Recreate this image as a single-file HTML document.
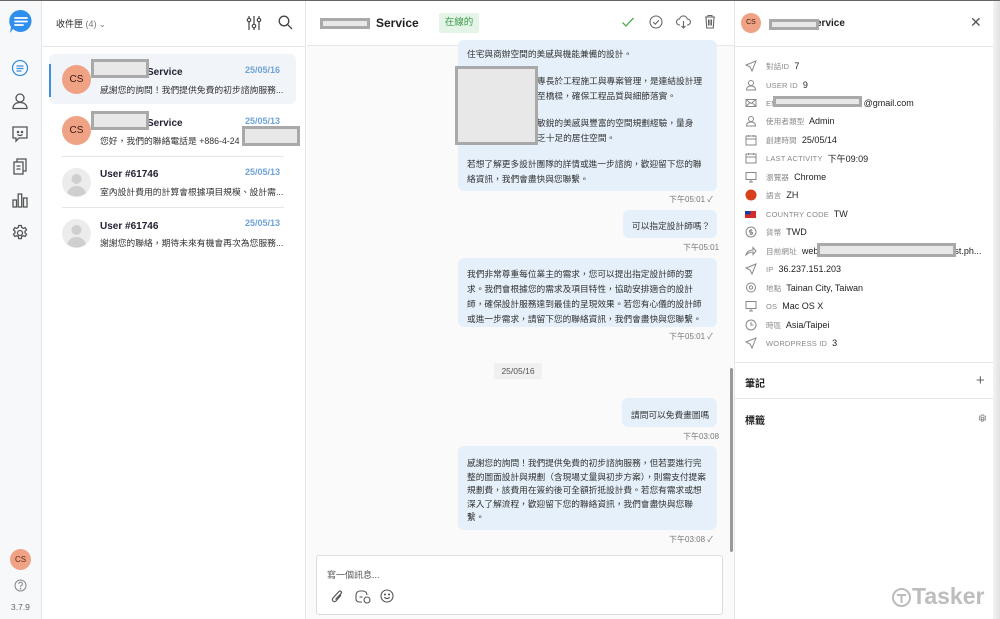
<!DOCTYPE html>
<html><head><meta charset="utf-8"><style>
*{box-sizing:border-box;margin:0;padding:0}
body{width:1000px;height:619px;overflow:hidden;position:relative;background:#fff;font-family:"Liberation Sans","Noto Sans CJK TC",sans-serif;color:#222}
.a{position:absolute}
.t{position:absolute;white-space:nowrap}
.red{position:absolute;background:#e8e8e8;border:3px solid #a9a9a9}
.bub{position:absolute;background:#e5f0fa;border-radius:6px;font-size:8.7px;color:#333}
.bub div{position:absolute;left:9px;white-space:nowrap}
.tm{position:absolute;font-size:8px;color:#777;white-space:nowrap}
.lbl{font-size:7.5px;color:#888;letter-spacing:.2px}
.row{position:absolute;left:745px;font-size:9px;color:#222;white-space:nowrap;height:12px;display:flex;align-items:center}
.row svg{margin-right:9px}
</style></head><body>
<div class="a" style="left:0;top:0;width:1000px;height:1px;background:#666"></div>
<!-- sidebar -->
<div class="a" style="left:0;top:1px;width:42px;height:618px;background:#f6f8fa;border-right:1px solid #e4e6ea"></div>
<svg class="a" style="left:9px;top:9px" width="24" height="26" viewBox="0 0 24 26"><path d="M12 1a11 11 0 1 1-8 19l-3 4 1-6A11 11 0 0 1 12 1z" fill="#2f8fec"/><path d="M6 9h12M6 12.5h12M6 16h8" stroke="#fff" stroke-width="1.8" stroke-linecap="round"/></svg>
<svg class="a" style="left:11px;top:59px" width="18" height="18" viewBox="0 0 18 18" fill="none" stroke="#3d8fe0" stroke-width="1.3"><circle cx="9" cy="9" r="7.5"/><path d="M5.5 7h7M5.5 9.5h7M5.5 12h5"/></svg>
<svg class="a" style="left:11px;top:92px" width="18" height="18" viewBox="0 0 18 18" fill="none" stroke="#555" stroke-width="1.3"><circle cx="9" cy="6" r="4"/><path d="M2 16.5c0-4 3-6 7-6s7 2 7 6z"/></svg>
<svg class="a" style="left:11px;top:125px" width="18" height="18" viewBox="0 0 18 18" fill="none" stroke="#555" stroke-width="1.3"><path d="M2 2h14v11H8l-3 3v-3H2z"/><circle cx="7" cy="7" r=".6" fill="#555"/><circle cx="11" cy="7" r=".6" fill="#555"/><path d="M6.5 9.5q2.5 2 5 0"/></svg>
<svg class="a" style="left:12px;top:158px" width="16" height="18" viewBox="0 0 16 18" fill="none" stroke="#555" stroke-width="1.3"><rect x="2" y="4" width="9" height="12"/><path d="M5 4V1h9v12h-3"/><path d="M4.5 8h4M4.5 11h4"/></svg>
<svg class="a" style="left:11px;top:191px" width="18" height="18" viewBox="0 0 18 18" fill="none" stroke="#555" stroke-width="1.3"><rect x="2" y="9" width="3.5" height="7"/><rect x="7.2" y="3" width="3.5" height="13"/><rect x="12.5" y="7" width="3.5" height="9"/></svg>
<svg class="a" style="left:11px;top:224px" width="18" height="18" viewBox="0 0 18 18" fill="none" stroke="#555" stroke-width="1.3"><circle cx="9" cy="9" r="2.5"/><path d="M7.7 1.5h2.6l.4 2 1.6.9 1.9-.7 1.3 2.2-1.5 1.4v1.5l1.5 1.4-1.3 2.2-1.9-.7-1.6.9-.4 2H7.7l-.4-2-1.6-.9-1.9.7-1.3-2.2 1.5-1.4V7.3L2.5 5.9l1.3-2.2 1.9.7 1.6-.9z"/></svg>
<div class="a" style="left:10px;top:549px;width:21px;height:21px;border-radius:50%;background:#f0a285;font-size:8px;color:#5a2a1a;text-align:center;line-height:21px">CS</div>
<svg class="a" style="left:14px;top:579px" width="13" height="13" viewBox="0 0 13 13" fill="none" stroke="#888" stroke-width="1"><circle cx="6.5" cy="6.5" r="5.5"/><path d="M4.8 5a1.8 1.8 0 1 1 2.4 1.6c-.6.3-.7.6-.7 1.3"/><circle cx="6.5" cy="9.6" r=".4" fill="#888"/></svg>
<div class="t" style="left:11px;top:602px;font-size:8.5px;color:#666">3.7.9</div>
<!-- list -->
<div class="a" style="left:42px;top:1px;width:264px;height:618px;background:#fff;border-right:1px solid #e4e6ea"></div>
<div class="a" style="left:42px;top:46px;width:264px;height:1px;background:#e4e6ea"></div>
<div class="t" style="left:56px;top:17px;font-size:9px;color:#222">收件匣 <span style="color:#777">(4)</span> <span style="color:#777;font-size:8px">⌄</span></div>
<svg class="a" style="left:246px;top:15px" width="16" height="16" viewBox="0 0 16 16" fill="none" stroke="#444" stroke-width="1.2"><path d="M3 1v14M8 1v14M13 1v14"/><circle cx="3" cy="5" r="1.7" fill="#fff"/><circle cx="8" cy="11" r="1.7" fill="#fff"/><circle cx="13" cy="5" r="1.7" fill="#fff"/></svg>
<svg class="a" style="left:278px;top:15px" width="15" height="15" viewBox="0 0 15 15" fill="none" stroke="#444" stroke-width="1.3"><circle cx="6" cy="6" r="4.8"/><path d="M9.6 9.6l4.4 4.4"/></svg>
<div class="a" style="left:49px;top:54px;width:247px;height:50px;background:#f1f4f8;border-radius:6px"></div>
<div class="a" style="left:49px;top:64px;width:2px;height:33px;background:#3d8fe0"></div>
<div class="a" style="left:62px;top:65px;width:29px;height:29px;border-radius:50%;background:#f0a285;font-size:10px;color:#3a1a10;text-align:center;line-height:29px">CS</div>
<div class="t" style="left:147px;top:67px;font-size:10px;font-weight:bold;color:#223">Service</div>
<div class="red" style="left:91px;top:59px;width:58px;height:19px"></div>
<div class="t" style="left:245px;top:65px;font-size:9px;font-weight:bold;color:#6fa3d8">25/05/16</div>
<div class="t" style="left:100px;top:83px;font-size:8.8px;color:#333">感謝您的詢問！我們提供免費的初步諮詢服務...</div>
<div class="a" style="left:62px;top:116px;width:29px;height:29px;border-radius:50%;background:#f0a285;font-size:10px;color:#3a1a10;text-align:center;line-height:29px">CS</div>
<div class="t" style="left:147px;top:118px;font-size:10px;font-weight:bold;color:#223">Service</div>
<div class="red" style="left:91px;top:111px;width:58px;height:19px"></div>
<div class="t" style="left:245px;top:116px;font-size:9px;font-weight:bold;color:#6fa3d8">25/05/13</div>
<div class="t" style="left:100px;top:134px;font-size:8.8px;color:#333">您好，我們的聯絡電話是 +886-4-24</div>
<div class="red" style="left:242px;top:126px;width:58px;height:20px"></div>
<div class="a" style="left:62px;top:156px;width:222px;height:1px;background:#e4e6ea"></div>
<svg class="a" style="left:62px;top:168px" width="29" height="29" viewBox="0 0 29 29"><circle cx="14.5" cy="14.5" r="14.5" fill="#ececec"/><circle cx="14.5" cy="11" r="5" fill="#cfcfcf"/><path d="M5 25c2-5 5.5-7 9.5-7s7.5 2 9.5 7a14.5 14.5 0 0 1-19 0z" fill="#cfcfcf"/></svg>
<div class="t" style="left:100px;top:169px;font-size:10px;font-weight:bold;color:#223">User #61746</div>
<div class="t" style="left:245px;top:167px;font-size:9px;font-weight:bold;color:#6fa3d8">25/05/13</div>
<div class="t" style="left:100px;top:185px;font-size:8.8px;color:#333">室內設計費用的計算會根據項目規模、設計需...</div>
<div class="a" style="left:62px;top:207px;width:222px;height:1px;background:#e4e6ea"></div>
<svg class="a" style="left:62px;top:219px" width="29" height="29" viewBox="0 0 29 29"><circle cx="14.5" cy="14.5" r="14.5" fill="#ececec"/><circle cx="14.5" cy="11" r="5" fill="#cfcfcf"/><path d="M5 25c2-5 5.5-7 9.5-7s7.5 2 9.5 7a14.5 14.5 0 0 1-19 0z" fill="#cfcfcf"/></svg>
<div class="t" style="left:100px;top:221px;font-size:10px;font-weight:bold;color:#223">User #61746</div>
<div class="t" style="left:245px;top:218px;font-size:9px;font-weight:bold;color:#6fa3d8">25/05/13</div>
<div class="t" style="left:100px;top:236px;font-size:8.8px;color:#333">謝謝您的聯絡，期待未來有機會再次為您服務...</div>
<!-- chat -->
<div class="a" style="left:307px;top:1px;width:427px;height:618px;background:#fafafa"></div>
<div class="a" style="left:307px;top:1px;width:427px;height:45px;background:#fff;border-bottom:1px solid #e4e6ea"></div>
<div class="t" style="left:376px;top:16px;font-size:12px;font-weight:bold;color:#222">Service</div>
<div class="a" style="left:320px;top:18px;width:50px;height:11px;background:#e8e8e8;border:3px solid #a9a9a9"></div>
<div class="t" style="left:439px;top:13px;width:40px;height:20px;background:#e4f4e6;color:#3a9a4a;font-size:9.5px;line-height:20px;text-align:center;border-radius:2px">在線的</div>
<svg class="a" style="left:621px;top:15px" width="14" height="14" viewBox="0 0 14 14" fill="none" stroke="#4caf50" stroke-width="1.3"><path d="M1.5 7.5l3.5 3.5 7.5-8"/></svg>
<svg class="a" style="left:649px;top:15px" width="14" height="14" viewBox="0 0 14 14" fill="none" stroke="#666" stroke-width="1.1"><circle cx="7" cy="7" r="6"/><path d="M4.3 7.2l2 2 3.6-4"/></svg>
<svg class="a" style="left:676px;top:15px" width="15" height="14" viewBox="0 0 15 14" fill="none" stroke="#666" stroke-width="1.1"><path d="M4 10H3.5a3 3 0 0 1 0-6 4 4 0 0 1 7.8 0 3 3 0 0 1 .2 6H11M7.5 6v7M5.5 11l2 2 2-2"/></svg>
<svg class="a" style="left:704px;top:14px" width="12" height="15" viewBox="0 0 12 15" fill="none" stroke="#666" stroke-width="1.1"><path d="M1 3h10M4 3V1.5h4V3M2 3l.7 11h6.6L10 3M4.5 5.5v6M6 5.5v6M7.5 5.5v6"/></svg>
<!-- bubble1 -->
<div class="bub" style="left:458px;top:40px;width:259px;height:151px">
<div style="top:7px">住宅與商辦空間的美感與機能兼備的設計。</div>
<div style="top:34px;left:79px">專長於工程施工與專案管理，是連結設計理</div>
<div style="top:49px;left:79px">至橋樑，確保工程品質與細節落實。</div>
<div style="top:76px;left:79px">敏銳的美感與豐富的空間規劃經驗，量身</div>
<div style="top:91px;left:79px">乏十足的居住空間。</div>
<div style="top:117px">若想了解更多設計團隊的詳情或進一步諮詢，歡迎留下您的聯</div>
<div style="top:132px">絡資訊，我們會盡快與您聯繫。</div>
</div>
<div class="red" style="left:455px;top:66px;width:83px;height:79px"></div>
<div class="tm" style="left:669px;top:194px">下午05:01 ✓</div>
<div class="bub" style="left:623px;top:210px;width:94px;height:28px"><div style="top:9px">可以指定設計師嗎？</div></div>
<div class="tm" style="left:683px;top:242px">下午05:01</div>
<div class="bub" style="left:458px;top:258px;width:259px;height:69px">
<div style="top:9px">我們非常尊重每位業主的需求，您可以提出指定設計師的要</div>
<div style="top:24px">求。我們會根據您的需求及項目特性，協助安排適合的設計</div>
<div style="top:39px">師，確保設計服務達到最佳的呈現效果。若您有心儀的設計師</div>
<div style="top:54px">或進一步需求，請留下您的聯絡資訊，我們會盡快與您聯繫。</div>
</div>
<div class="tm" style="left:669px;top:331px">下午05:01 ✓</div>
<div class="t" style="left:494px;top:363px;width:48px;height:16px;background:#f0f0f0;font-size:8.5px;color:#555;line-height:16px;text-align:center">25/05/16</div>
<div class="bub" style="left:622px;top:398px;width:95px;height:29px"><div style="top:10px">請問可以免費畫圖嗎</div></div>
<div class="tm" style="left:683px;top:431px">下午03:08</div>
<div class="bub" style="left:458px;top:446px;width:259px;height:84px">
<div style="top:10px">感謝您的詢問！我們提供免費的初步諮詢服務，但若要進行完</div>
<div style="top:23.5px">整的圖面設計與規劃（含現場丈量與初步方案），則需支付提案</div>
<div style="top:37px">規劃費，該費用在簽約後可全額折抵設計費。若您有需求或想</div>
<div style="top:50.5px">深入了解流程，歡迎留下您的聯絡資訊，我們會盡快與您聯</div>
<div style="top:64px">繫。</div>
</div>
<div class="tm" style="left:669px;top:534px">下午03:08 ✓</div>
<div class="a" style="left:730px;top:368px;width:3px;height:184px;background:#999;border-radius:2px"></div>
<div class="a" style="left:316px;top:555px;width:407px;height:60px;background:#fff;border:1px solid #ddd;border-radius:3px"></div>
<div class="t" style="left:327px;top:568px;font-size:9px;color:#555">寫一個訊息...</div>
<svg class="a" style="left:331px;top:590px" width="13" height="14" viewBox="0 0 13 14" fill="none" stroke="#555" stroke-width="1.2"><path d="M10 5L5 11a2 2 0 0 1-3-3l6-6.5a1.3 1.3 0 0 1 2 2L4.5 9.5"/></svg>
<svg class="a" style="left:355px;top:590px" width="16" height="14" viewBox="0 0 16 14" fill="none" stroke="#555" stroke-width="1.1"><path d="M7 12H4a3 3 0 0 1-3-3V5a4 4 0 0 1 4-4h3a4 4 0 0 1 4 4"/><circle cx="12" cy="10" r="3"/><path d="M4.5 7h3"/></svg>
<svg class="a" style="left:380px;top:589px" width="14" height="14" viewBox="0 0 14 14" fill="none" stroke="#555" stroke-width="1.1"><circle cx="7" cy="7" r="6"/><circle cx="5" cy="5.5" r=".5" fill="#555"/><circle cx="9" cy="5.5" r=".5" fill="#555"/><path d="M4.3 8.3q2.7 2.5 5.4 0"/></svg>
<!-- right panel -->
<div class="a" style="left:734px;top:1px;width:1px;height:618px;background:#e4e6ea"></div>
<div class="a" style="left:735px;top:46px;width:258px;height:1px;background:#e4e6ea"></div>
<div class="a" style="left:993px;top:1px;width:7px;height:618px;background:linear-gradient(90deg,#f4f4f4,#e2e2e2)"></div>
<div class="a" style="left:741px;top:13px;width:20px;height:20px;border-radius:50%;background:#f0a285;font-size:7px;color:#3a1a10;text-align:center;line-height:20px">CS</div>
<div class="t" style="left:816px;top:18px;font-size:10px;font-weight:bold;color:#222">ervice</div>
<div class="a" style="left:769px;top:19px;width:50px;height:11px;background:#e8e8e8;border:3px solid #a9a9a9"></div>
<div class="t" style="left:970px;top:14px;font-size:14px;color:#555">✕</div>
<div class="row" style="top:60px"><svg width="12" height="12" viewBox="0 0 12 12" fill="none" stroke="#888"><path d="M11 1L1 5l4 2 2 4z"/></svg><span class="lbl">對話ID</span>&nbsp; 7</div>
<div class="row" style="top:79px"><svg width="12" height="12" viewBox="0 0 12 12" fill="none" stroke="#888"><circle cx="6" cy="4" r="2.5"/><path d="M1.5 11c0-3 2-4 4.5-4s4.5 1 4.5 4z"/></svg><span class="lbl">USER ID</span>&nbsp; 9</div>
<div class="row" style="top:97px"><svg width="12" height="12" viewBox="0 0 12 12" fill="none" stroke="#888"><rect x="1" y="2.5" width="10" height="7"/><path d="M1 2.5l5 4 5-4M1 9.5l3.5-3.5M11 9.5L7.5 6"/></svg><span class="lbl">EM</span><span style="display:inline-block;width:86px"></span>@gmail.com</div>
<div class="a" style="left:773px;top:96px;width:89px;height:11px;background:#e8e8e8;border:3px solid #a9a9a9"></div>
<div class="row" style="top:115px"><svg width="12" height="12" viewBox="0 0 12 12" fill="none" stroke="#888"><circle cx="6" cy="4" r="2.5"/><path d="M1.5 11c0-3 2-4 4.5-4s4.5 1 4.5 4z"/></svg><span class="lbl">使用者類型</span>&nbsp; Admin</div>
<div class="row" style="top:134px"><svg width="12" height="12" viewBox="0 0 12 12" fill="none" stroke="#888"><rect x="1" y="2" width="10" height="9"/><path d="M1 5h10M3.5 1v2M8.5 1v2"/></svg><span class="lbl">創建時間</span>&nbsp; 25/05/14</div>
<div class="row" style="top:152px"><svg width="12" height="12" viewBox="0 0 12 12" fill="none" stroke="#888"><rect x="1" y="2" width="10" height="9"/><path d="M1 5h10M3.5 1v2M8.5 1v2"/></svg><span class="lbl">LAST ACTIVITY</span>&nbsp; 下午09:09</div>
<div class="row" style="top:171px"><svg width="12" height="12" viewBox="0 0 12 12" fill="none" stroke="#888"><rect x="1" y="1.5" width="10" height="7"/><path d="M4 11h4M6 8.5V11"/></svg><span class="lbl">瀏覽器</span>&nbsp; Chrome</div>
<div class="row" style="top:189px"><svg width="12" height="12" viewBox="0 0 12 12"><circle cx="6" cy="6" r="5.5" fill="#d8401c"/></svg><span class="lbl">語言</span>&nbsp; ZH</div>
<div class="row" style="top:208px"><svg width="12" height="12" viewBox="0 0 12 12"><rect x="0" y="3" width="11" height="7" fill="#d62a2a"/><rect x="0" y="3" width="5.5" height="3.5" fill="#1c3aa0"/></svg><span class="lbl">COUNTRY CODE</span>&nbsp; TW</div>
<div class="row" style="top:226px"><svg width="12" height="12" viewBox="0 0 12 12" fill="none" stroke="#888"><circle cx="6" cy="6" r="5"/><path d="M7.5 4.3H5.3a1 1 0 0 0 0 2h1.4a1 1 0 0 1 0 2H4.5M6 3v6"/></svg><span class="lbl">貨幣</span>&nbsp; TWD</div>
<div class="row" style="top:245px"><svg width="12" height="12" viewBox="0 0 12 12" fill="none" stroke="#888"><path d="M1 10c1-4 4-5 7-5V2.5L11 6 8 9.5V7c-3 0-5 1-7 3z"/></svg><span class="lbl">目前網址</span>&nbsp; web<span style="display:inline-block;width:136px"></span>st.ph...</div>
<div class="a" style="left:817px;top:243px;width:139px;height:14px;background:#e8e8e8;border:3px solid #a9a9a9"></div>
<div class="row" style="top:263px"><svg width="12" height="12" viewBox="0 0 12 12" fill="none" stroke="#888"><path d="M11 1L1 5l4 2 2 4z"/></svg><span class="lbl">IP</span>&nbsp; 36.237.151.203</div>
<div class="row" style="top:282px"><svg width="12" height="12" viewBox="0 0 12 12" fill="none" stroke="#888"><circle cx="6" cy="5.5" r="4.5"/><circle cx="6" cy="5.5" r="1.7"/></svg><span class="lbl">地點</span>&nbsp; Tainan City, Taiwan</div>
<div class="row" style="top:300px"><svg width="12" height="12" viewBox="0 0 12 12" fill="none" stroke="#888"><rect x="1" y="1.5" width="10" height="7"/><path d="M4 11h4M6 8.5V11"/></svg><span class="lbl">OS</span>&nbsp; Mac OS X</div>
<div class="row" style="top:319px"><svg width="12" height="12" viewBox="0 0 12 12" fill="none" stroke="#888"><circle cx="6" cy="6" r="5"/><path d="M6 3v3h2.5"/></svg><span class="lbl">時區</span>&nbsp; Asia/Taipei</div>
<div class="row" style="top:337px"><svg width="12" height="12" viewBox="0 0 12 12" fill="none" stroke="#888"><path d="M11 1L1 5l4 2 2 4z"/></svg><span class="lbl">WORDPRESS ID</span>&nbsp; 3</div>
<div class="a" style="left:735px;top:362px;width:258px;height:1px;background:#e4e6ea"></div>
<div class="t" style="left:745px;top:375px;font-size:10px;font-weight:bold;color:#222">筆記</div>
<div class="t" style="left:976px;top:372px;font-size:15px;color:#666">+</div>
<div class="a" style="left:735px;top:398px;width:258px;height:1px;background:#e4e6ea"></div>
<div class="t" style="left:745px;top:412px;font-size:10px;font-weight:bold;color:#222">標籤</div>
<svg class="a" style="left:978px;top:414px" width="9" height="9" viewBox="0 0 18 18" fill="none" stroke="#888" stroke-width="1.6"><circle cx="9" cy="9" r="2.5"/><path d="M7.7 1.5h2.6l.4 2 1.6.9 1.9-.7 1.3 2.2-1.5 1.4v1.5l1.5 1.4-1.3 2.2-1.9-.7-1.6.9-.4 2H7.7l-.4-2-1.6-.9-1.9.7-1.3-2.2 1.5-1.4V7.3L2.5 5.9l1.3-2.2 1.9.7 1.6-.9z"/></svg>
<svg class="a" style="left:891px;top:587px" width="21" height="21" viewBox="0 0 21 21" fill="none" stroke="#bbb" stroke-width="2"><circle cx="10.5" cy="10.5" r="8.5"/><path d="M6 8h9M10.5 8v8" /></svg>
<div class="t" style="left:912px;top:583px;font-size:23px;font-weight:bold;color:#bdbdbd">Tasker</div>
</body></html>
